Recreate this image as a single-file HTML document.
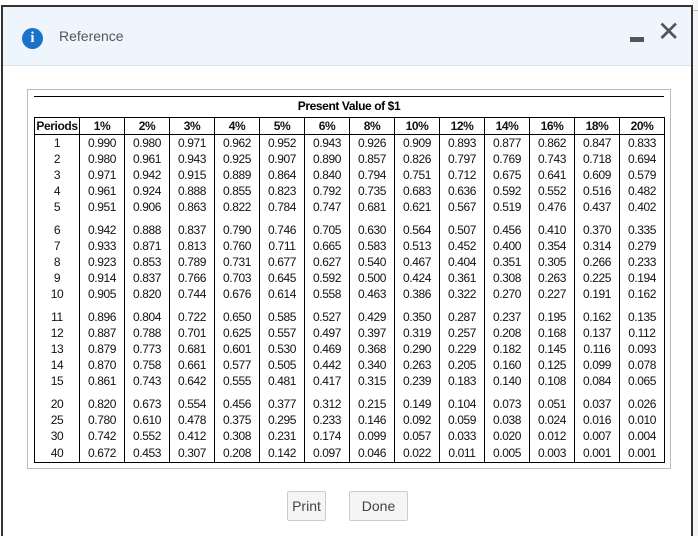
<!DOCTYPE html>
<html><head><meta charset="utf-8"><style>
*{margin:0;padding:0;box-sizing:border-box}
body{width:698px;height:536px;overflow:hidden;background:#fff;font-family:"Liberation Sans",Arial,sans-serif;position:relative}
.bg{position:absolute;left:692px;top:0;width:6px;height:536px;background:#f4f4f4}
.bg2{position:absolute;left:692px;top:10px;width:6px;height:1px;background:#bbb}
.dlg{position:absolute;left:1px;top:5px;width:692px;height:531px;border:2px solid #333;border-bottom:none;background:#fff}
.hdr{position:absolute;left:0;top:0;width:688px;height:59px;background:#eff5fd;border-bottom:1px solid #d6e2ee}
.ico{position:absolute;left:19px;top:21px;width:21px;height:21px;border-radius:50%;background:#1a73c9;color:#fff;font:bold 15px/21px "Liberation Serif",serif;text-align:center}
.ttl{position:absolute;left:56px;top:21px;font-size:14px;color:#555}
.min{position:absolute;left:627px;top:30px;width:14px;height:5px;background:#555}
.x{position:absolute;left:654px;top:9px;font-size:28px;color:#555;font-weight:normal;line-height:32px}
.box{position:absolute;left:24px;top:82px;width:644px;height:380px;border:1px solid #bbb}
.line{position:absolute;left:6px;top:6px;width:630px;height:1px;background:#000}
.cap{position:absolute;left:0;width:642px;top:9px;text-align:center;font:bold 12px "Liberation Sans",sans-serif;letter-spacing:-0.4px}
table{position:absolute;left:6px;top:27px;border-collapse:collapse;font-size:12px;letter-spacing:-0.4px;color:#111}
td,th{width:45px;text-align:center;border-left:1px solid #000;border-right:1px solid #000;height:16px;line-height:16px;padding:0}
th{border:1px solid #000;height:17px;font-weight:bold}
tr.g td{height:23px;padding-top:7px}
tr.l td{border-bottom:1px solid #000;height:18px}
.btn{position:absolute;top:484px;height:30px;border:1px solid #ccc;border-radius:2px;background:#f5f5f5;font-size:14px;color:#444;text-align:center;line-height:28px}
</style></head><body>
<div class="bg"></div><div class="bg2"></div>
<div class="dlg">
<div class="hdr"><div class="ico">i</div><div class="ttl">Reference</div><div class="min"></div><div class="x">✕</div></div>
<div class="box"><div class="line"></div><div class="cap">Present Value of $1</div>
<table>
<tr><th>Periods</th><th>1%</th><th>2%</th><th>3%</th><th>4%</th><th>5%</th><th>6%</th><th>8%</th><th>10%</th><th>12%</th><th>14%</th><th>16%</th><th>18%</th><th>20%</th></tr>
<tr><td>1</td><td>0.990</td><td>0.980</td><td>0.971</td><td>0.962</td><td>0.952</td><td>0.943</td><td>0.926</td><td>0.909</td><td>0.893</td><td>0.877</td><td>0.862</td><td>0.847</td><td>0.833</td></tr>
<tr><td>2</td><td>0.980</td><td>0.961</td><td>0.943</td><td>0.925</td><td>0.907</td><td>0.890</td><td>0.857</td><td>0.826</td><td>0.797</td><td>0.769</td><td>0.743</td><td>0.718</td><td>0.694</td></tr>
<tr><td>3</td><td>0.971</td><td>0.942</td><td>0.915</td><td>0.889</td><td>0.864</td><td>0.840</td><td>0.794</td><td>0.751</td><td>0.712</td><td>0.675</td><td>0.641</td><td>0.609</td><td>0.579</td></tr>
<tr><td>4</td><td>0.961</td><td>0.924</td><td>0.888</td><td>0.855</td><td>0.823</td><td>0.792</td><td>0.735</td><td>0.683</td><td>0.636</td><td>0.592</td><td>0.552</td><td>0.516</td><td>0.482</td></tr>
<tr><td>5</td><td>0.951</td><td>0.906</td><td>0.863</td><td>0.822</td><td>0.784</td><td>0.747</td><td>0.681</td><td>0.621</td><td>0.567</td><td>0.519</td><td>0.476</td><td>0.437</td><td>0.402</td></tr>
<tr class="g"><td>6</td><td>0.942</td><td>0.888</td><td>0.837</td><td>0.790</td><td>0.746</td><td>0.705</td><td>0.630</td><td>0.564</td><td>0.507</td><td>0.456</td><td>0.410</td><td>0.370</td><td>0.335</td></tr>
<tr><td>7</td><td>0.933</td><td>0.871</td><td>0.813</td><td>0.760</td><td>0.711</td><td>0.665</td><td>0.583</td><td>0.513</td><td>0.452</td><td>0.400</td><td>0.354</td><td>0.314</td><td>0.279</td></tr>
<tr><td>8</td><td>0.923</td><td>0.853</td><td>0.789</td><td>0.731</td><td>0.677</td><td>0.627</td><td>0.540</td><td>0.467</td><td>0.404</td><td>0.351</td><td>0.305</td><td>0.266</td><td>0.233</td></tr>
<tr><td>9</td><td>0.914</td><td>0.837</td><td>0.766</td><td>0.703</td><td>0.645</td><td>0.592</td><td>0.500</td><td>0.424</td><td>0.361</td><td>0.308</td><td>0.263</td><td>0.225</td><td>0.194</td></tr>
<tr><td>10</td><td>0.905</td><td>0.820</td><td>0.744</td><td>0.676</td><td>0.614</td><td>0.558</td><td>0.463</td><td>0.386</td><td>0.322</td><td>0.270</td><td>0.227</td><td>0.191</td><td>0.162</td></tr>
<tr class="g"><td>11</td><td>0.896</td><td>0.804</td><td>0.722</td><td>0.650</td><td>0.585</td><td>0.527</td><td>0.429</td><td>0.350</td><td>0.287</td><td>0.237</td><td>0.195</td><td>0.162</td><td>0.135</td></tr>
<tr><td>12</td><td>0.887</td><td>0.788</td><td>0.701</td><td>0.625</td><td>0.557</td><td>0.497</td><td>0.397</td><td>0.319</td><td>0.257</td><td>0.208</td><td>0.168</td><td>0.137</td><td>0.112</td></tr>
<tr><td>13</td><td>0.879</td><td>0.773</td><td>0.681</td><td>0.601</td><td>0.530</td><td>0.469</td><td>0.368</td><td>0.290</td><td>0.229</td><td>0.182</td><td>0.145</td><td>0.116</td><td>0.093</td></tr>
<tr><td>14</td><td>0.870</td><td>0.758</td><td>0.661</td><td>0.577</td><td>0.505</td><td>0.442</td><td>0.340</td><td>0.263</td><td>0.205</td><td>0.160</td><td>0.125</td><td>0.099</td><td>0.078</td></tr>
<tr><td>15</td><td>0.861</td><td>0.743</td><td>0.642</td><td>0.555</td><td>0.481</td><td>0.417</td><td>0.315</td><td>0.239</td><td>0.183</td><td>0.140</td><td>0.108</td><td>0.084</td><td>0.065</td></tr>
<tr class="g"><td>20</td><td>0.820</td><td>0.673</td><td>0.554</td><td>0.456</td><td>0.377</td><td>0.312</td><td>0.215</td><td>0.149</td><td>0.104</td><td>0.073</td><td>0.051</td><td>0.037</td><td>0.026</td></tr>
<tr><td>25</td><td>0.780</td><td>0.610</td><td>0.478</td><td>0.375</td><td>0.295</td><td>0.233</td><td>0.146</td><td>0.092</td><td>0.059</td><td>0.038</td><td>0.024</td><td>0.016</td><td>0.010</td></tr>
<tr><td>30</td><td>0.742</td><td>0.552</td><td>0.412</td><td>0.308</td><td>0.231</td><td>0.174</td><td>0.099</td><td>0.057</td><td>0.033</td><td>0.020</td><td>0.012</td><td>0.007</td><td>0.004</td></tr>
<tr class="l"><td>40</td><td>0.672</td><td>0.453</td><td>0.307</td><td>0.208</td><td>0.142</td><td>0.097</td><td>0.046</td><td>0.022</td><td>0.011</td><td>0.005</td><td>0.003</td><td>0.001</td><td>0.001</td></tr>
</table></div>
<div class="btn" style="left:284px;width:39px">Print</div>
<div class="btn" style="left:346px;width:59px">Done</div>
</div>
</body></html>
